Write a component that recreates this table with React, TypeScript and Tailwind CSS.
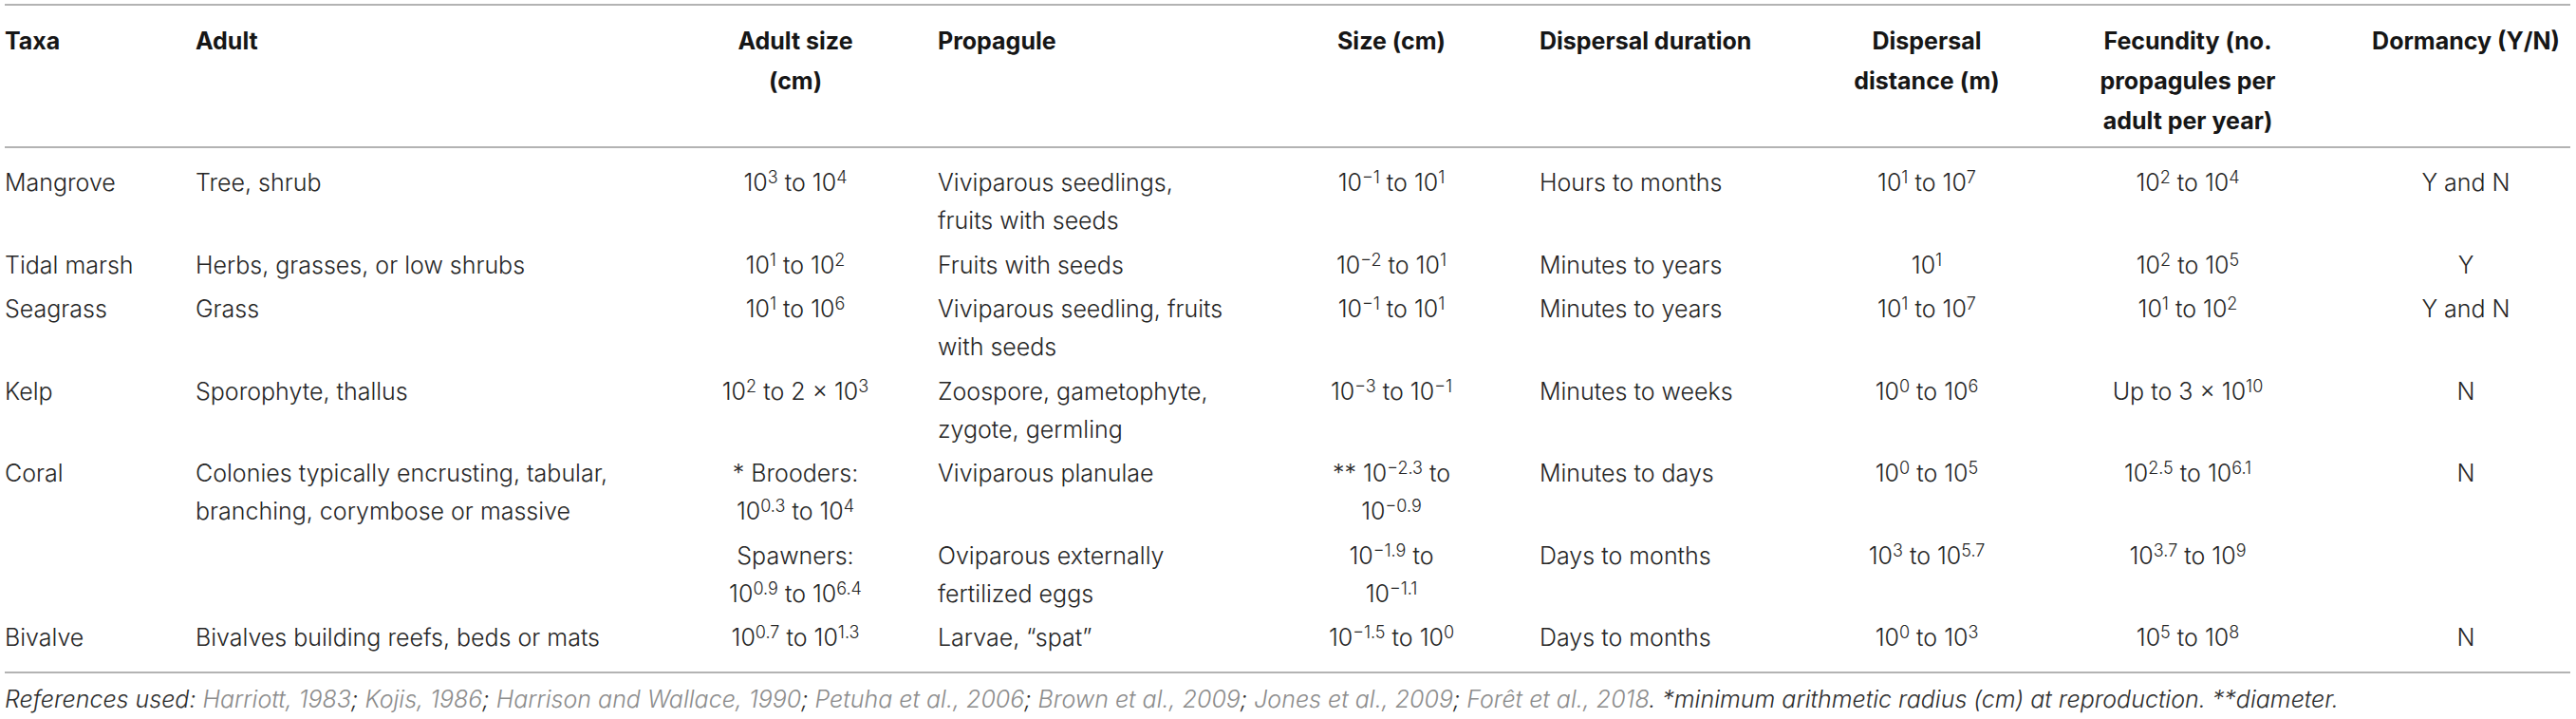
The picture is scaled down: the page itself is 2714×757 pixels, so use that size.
import React from "react";

const S = ({ children }: { children: React.ReactNode }) => (
  <sup className="text-[18px] top-[-8px]">{children}</sup>
);

type CellProps = {
  children?: React.ReactNode;
  center?: boolean;
  pad?: "none" | "l30" | "l38";
  first?: boolean;
  last?: boolean;
  rowSpan?: number;
};

const Td = ({ children, center, pad = "none", first, last, rowSpan }: CellProps) => (
  <td
    rowSpan={rowSpan}
    className={[
      "align-top leading-[40px] p-0",
      center ? "text-center" : "text-left",
      pad === "l30" ? "pl-[30px]" : pad === "l38" ? "pl-[38px]" : "",
      first ? "pt-[16px]" : "pt-[3px]",
      last ? "pb-[16px] border-b-2 border-[#b3b3b3]" : "pb-[3.5px]",
    ].join(" ")}
  >
    {children}
  </td>
);

const Th = ({ children, center, pad = "none" }: CellProps) => (
  <th
    className={[
      "align-top leading-[42px] pt-[16px] pb-[6px] px-0 border-t-2 border-b-2 border-[#b3b3b3] font-bold text-[#161616]",
      center ? "text-center" : "text-left",
      pad === "l30" ? "pl-[30px]" : pad === "l38" ? "pl-[38px]" : "",
    ].join(" ")}
  >
    {children}
  </th>
);

const M = "\u2212";

export default function App() {
  return (
    <div className="w-[2714px] h-[757px] bg-white pt-[4px] pl-[5px] overflow-hidden font-['Inter','Liberation_Sans',sans-serif] text-[25px] font-light text-[#262626]">
      <table className="table-fixed w-[2703px] border-separate border-spacing-0">
        <colgroup>
          <col className="w-[201px]" />
          <col className="w-[512px]" />
          <col className="w-[240px]" />
          <col className="w-[382px]" />
          <col className="w-[252px]" />
          <col className="w-[308px]" />
          <col className="w-[260px]" />
          <col className="w-[290px]" />
          <col className="w-[258px]" />
        </colgroup>
        <thead>
          <tr>
            <Th>Taxa</Th>
            <Th>Adult</Th>
            <Th center>
              Adult size
              <br />
              (cm)
            </Th>
            <Th pad="l30">Propagule</Th>
            <Th center>Size (cm)</Th>
            <Th pad="l30">Dispersal duration</Th>
            <Th center>
              Dispersal
              <br />
              distance (m)
            </Th>
            <Th center>
              Fecundity (no.
              <br />
              propagules per
              <br />
              adult per year)
            </Th>
            <Th center pad="l38">Dormancy (Y/N)</Th>
          </tr>
        </thead>
        <tbody>
          <tr>
            <Td first>Mangrove</Td>
            <Td first>Tree, shrub</Td>
            <Td first center>
              10<S>3</S> to 10<S>4</S>
            </Td>
            <Td first pad="l30">
              Viviparous seedlings,
              <br />
              fruits with seeds
            </Td>
            <Td first center>
              10<S>{M}1</S> to 10<S>1</S>
            </Td>
            <Td first pad="l30">Hours to months</Td>
            <Td first center>
              10<S>1</S> to 10<S>7</S>
            </Td>
            <Td first center>
              10<S>2</S> to 10<S>4</S>
            </Td>
            <Td first center pad="l38">Y and N</Td>
          </tr>
          <tr>
            <Td>Tidal marsh</Td>
            <Td>Herbs, grasses, or low shrubs</Td>
            <Td center>
              10<S>1</S> to 10<S>2</S>
            </Td>
            <Td pad="l30">Fruits with seeds</Td>
            <Td center>
              10<S>{M}2</S> to 10<S>1</S>
            </Td>
            <Td pad="l30">Minutes to years</Td>
            <Td center>
              10<S>1</S>
            </Td>
            <Td center>
              10<S>2</S> to 10<S>5</S>
            </Td>
            <Td center pad="l38">Y</Td>
          </tr>
          <tr>
            <Td>Seagrass</Td>
            <Td>Grass</Td>
            <Td center>
              10<S>1</S> to 10<S>6</S>
            </Td>
            <Td pad="l30">
              Viviparous seedling, fruits
              <br />
              with seeds
            </Td>
            <Td center>
              10<S>{M}1</S> to 10<S>1</S>
            </Td>
            <Td pad="l30">Minutes to years</Td>
            <Td center>
              10<S>1</S> to 10<S>7</S>
            </Td>
            <Td center>
              10<S>1</S> to 10<S>2</S>
            </Td>
            <Td center pad="l38">Y and N</Td>
          </tr>
          <tr>
            <Td>Kelp</Td>
            <Td>Sporophyte, thallus</Td>
            <Td center>
              10<S>2</S> to 2 × 10<S>3</S>
            </Td>
            <Td pad="l30">
              Zoospore, gametophyte,
              <br />
              zygote, germling
            </Td>
            <Td center>
              10<S>{M}3</S> to 10<S>{M}1</S>
            </Td>
            <Td pad="l30">Minutes to weeks</Td>
            <Td center>
              10<S>0</S> to 10<S>6</S>
            </Td>
            <Td center>
              Up to 3 × 10<S>10</S>
            </Td>
            <Td center pad="l38">N</Td>
          </tr>
          <tr>
            <Td rowSpan={2}>Coral</Td>
            <Td rowSpan={2}>
              Colonies typically encrusting, tabular,
              <br />
              branching, corymbose or massive
            </Td>
            <Td center>
              * Brooders:
              <br />
              10<S>0.3</S> to 10<S>4</S>
            </Td>
            <Td pad="l30">Viviparous planulae</Td>
            <Td center>
              ** 10<S>{M}2.3</S> to
              <br />
              10<S>{M}0.9</S>
            </Td>
            <Td pad="l30">Minutes to days</Td>
            <Td center>
              10<S>0</S> to 10<S>5</S>
            </Td>
            <Td center>
              10<S>2.5</S> to 10<S>6.1</S>
            </Td>
            <Td center pad="l38" rowSpan={2}>
              N
            </Td>
          </tr>
          <tr>
            <Td center>
              Spawners:
              <br />
              10<S>0.9</S> to 10<S>6.4</S>
            </Td>
            <Td pad="l30">
              Oviparous externally
              <br />
              fertilized eggs
            </Td>
            <Td center>
              10<S>{M}1.9</S> to
              <br />
              10<S>{M}1.1</S>
            </Td>
            <Td pad="l30">Days to months</Td>
            <Td center>
              10<S>3</S> to 10<S>5.7</S>
            </Td>
            <Td center>
              10<S>3.7</S> to 10<S>9</S>
            </Td>
          </tr>
          <tr>
            <Td last>Bivalve</Td>
            <Td last>Bivalves building reefs, beds or mats</Td>
            <Td last center>
              10<S>0.7</S> to 10<S>1.3</S>
            </Td>
            <Td last pad="l30">Larvae, “spat”</Td>
            <Td last center>
              10<S>{M}1.5</S> to 10<S>0</S>
            </Td>
            <Td last pad="l30">Days to months</Td>
            <Td last center>
              10<S>0</S> to 10<S>3</S>
            </Td>
            <Td last center>
              10<S>5</S> to 10<S>8</S>
            </Td>
            <Td last center pad="l38">N</Td>
          </tr>
        </tbody>
      </table>
      <p className="mt-[7px] leading-[40px] italic text-[#2e2e2e]">
        References used: <span className="text-[#8c8c8c]">Harriott, 1983</span>;{" "}
        <span className="text-[#8c8c8c]">Kojis, 1986</span>;{" "}
        <span className="text-[#8c8c8c]">Harrison and Wallace, 1990</span>;{" "}
        <span className="text-[#8c8c8c]">Petuha et al., 2006</span>;{" "}
        <span className="text-[#8c8c8c]">Brown et al., 2009</span>;{" "}
        <span className="text-[#8c8c8c]">Jones et al., 2009</span>;{" "}
        <span className="text-[#8c8c8c]">Forêt et al., 2018</span>. *minimum arithmetic radius (cm) at
        reproduction. **diameter.
      </p>
    </div>
  );
}
